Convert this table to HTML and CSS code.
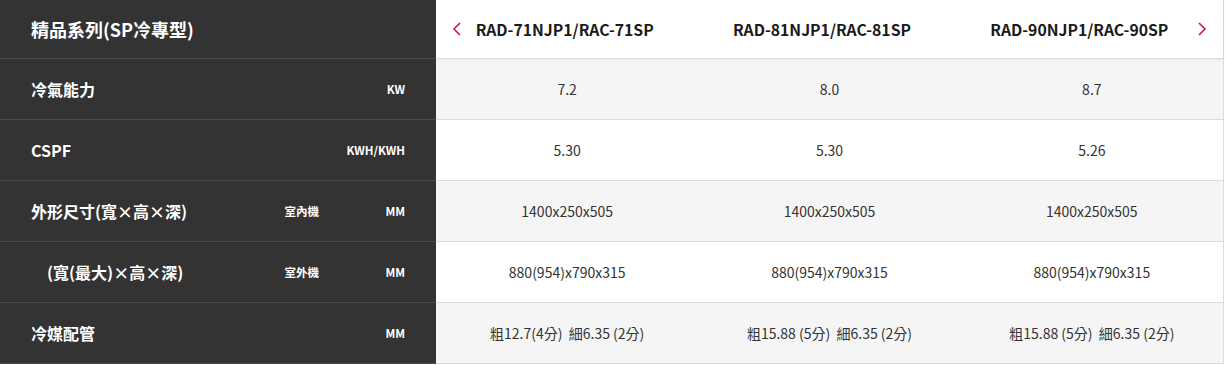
FILE: index.html
```html
<!DOCTYPE html>
<html lang="zh-Hant">
<head>
<meta charset="utf-8">
<title>精品系列(SP冷專型)</title>
<link rel="stylesheet" href="styles.css">
</head>
<body>
<div class="spec">
  <div class="row head">
    <div class="side"><span class="title">精品系列(SP冷專型)</span></div>
    <div class="models">
      <button class="nav prev" aria-label="prev"><svg width="10" height="14" viewBox="0 0 10 14"><polyline points="8,1 2,7 8,13" fill="none" stroke="#d6163c" stroke-width="1.6"/></svg></button>
      <div class="model">RAD-71NJP1/RAC-71SP</div>
      <div class="model">RAD-81NJP1/RAC-81SP</div>
      <div class="model">RAD-90NJP1/RAC-90SP</div>
      <button class="nav next" aria-label="next"><svg width="10" height="14" viewBox="0 0 10 14"><polyline points="2,1 8,7 2,13" fill="none" stroke="#d6163c" stroke-width="1.6"/></svg></button>
    </div>
  </div>
  <div class="row alt">
    <div class="side"><span class="label">冷氣能力</span><span class="sub"></span><span class="unit">KW</span></div>
    <div class="val">7.2</div><div class="val">8.0</div><div class="val">8.7</div>
  </div>
  <div class="row">
    <div class="side"><span class="label">CSPF</span><span class="sub"></span><span class="unit">KWH/KWH</span></div>
    <div class="val">5.30</div><div class="val">5.30</div><div class="val">5.26</div>
  </div>
  <div class="row alt">
    <div class="side"><span class="label">外形尺寸(寬×高×深)</span><span class="sub">室內機</span><span class="unit">MM</span></div>
    <div class="val">1400x250x505</div><div class="val">1400x250x505</div><div class="val">1400x250x505</div>
  </div>
  <div class="row">
    <div class="side"><span class="label indent">(寬(最大)×高×深)</span><span class="sub">室外機</span><span class="unit">MM</span></div>
    <div class="val">880(954)x790x315</div><div class="val">880(954)x790x315</div><div class="val">880(954)x790x315</div>
  </div>
  <div class="row alt">
    <div class="side"><span class="label">冷媒配管</span><span class="sub"></span><span class="unit">MM</span></div>
    <div class="val">粗12.7(4分)&nbsp; 細6.35 (2分)</div><div class="val">粗15.88 (5分)&nbsp; 細6.35 (2分)</div><div class="val">粗15.88 (5分)&nbsp; 細6.35 (2分)</div>
  </div>
</div>
</body>
</html>
```
FILE: styles.css
```css
html, body {
  margin: 0;
  padding: 0;
  background: #fff;
}
body {
  font-family: "Noto Sans CJK TC", "Noto Sans", sans-serif;
  color: #333;
}
.spec {
  width: 1224px;
}
.row {
  display: grid;
  grid-template-columns: 436px repeat(3, 1fr);
  height: 61px;
  box-sizing: border-box;
  border-right: 1px solid #dcdcdc;
}
.row.head {
  height: 59px;
  grid-template-columns: 436px 1fr;
  position: relative;
  z-index: 1;
}
.side {
  background: #333;
  border-bottom: 1px solid #4b4b4b;
  display: grid;
  grid-template-columns: 1fr 80px 86px;
  align-items: center;
  padding: 0 31px;
  color: #fff;
  font-weight: 700;
}
.head .side {
  grid-template-columns: 1fr;
}
.title {
  font-size: 18px;
}
.label {
  font-size: 16px;
}
.label.indent {
  padding-left: 16px;
}
.sub, .unit {
  font-size: 11.5px;
  text-align: right;
}
.models {
  position: relative;
  display: grid;
  grid-template-columns: repeat(3, 1fr);
  align-items: center;
  padding-right: 15px;
  background: #fff;
  border-bottom: 1px solid #dcdcdc;
  box-shadow: 0 1px 3px rgba(0,0,0,0.06);
}
.model {
  text-align: center;
  font-size: 15.75px;
  font-weight: 700;
  color: #1a1a1a;
}
.nav {
  position: absolute;
  top: 22px;
  width: 10px;
  height: 14px;
  padding: 0;
  border: 0;
  background: none;
  display: block;
}
.nav svg {
  display: block;
}
.nav.prev {
  left: 16px;
}
.nav.next {
  right: 16px;
}
.val {
  display: flex;
  align-items: center;
  justify-content: center;
  font-size: 14px;
  color: #333;
  background: #fff;
  border-bottom: 1px solid #dcdcdc;
}
.alt .val {
  background: #f5f5f5;
}
```
